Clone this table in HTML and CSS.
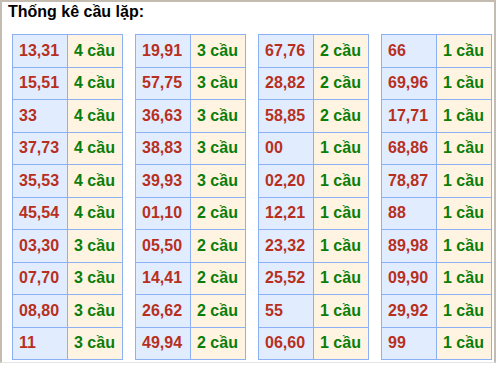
FILE: index.html
```html
<!DOCTYPE html>
<html lang="vi">
<head>
<meta charset="utf-8">
<title>Thống kê cầu lặp</title>
<link rel="stylesheet" href="styles.css">
</head>
<body>
<div class="frame">
  <h2 class="title">Thống kê cầu lặp:</h2>
  <div class="tables">
    <table class="stat">
      <tr><td class="num">13,31</td><td class="cnt">4 cầu</td></tr>
      <tr><td class="num">15,51</td><td class="cnt">4 cầu</td></tr>
      <tr><td class="num">33</td><td class="cnt">4 cầu</td></tr>
      <tr><td class="num">37,73</td><td class="cnt">4 cầu</td></tr>
      <tr><td class="num">35,53</td><td class="cnt">4 cầu</td></tr>
      <tr><td class="num">45,54</td><td class="cnt">4 cầu</td></tr>
      <tr><td class="num">03,30</td><td class="cnt">3 cầu</td></tr>
      <tr><td class="num">07,70</td><td class="cnt">3 cầu</td></tr>
      <tr><td class="num">08,80</td><td class="cnt">3 cầu</td></tr>
      <tr><td class="num">11</td><td class="cnt">3 cầu</td></tr>
    </table>
    <table class="stat">
      <tr><td class="num">19,91</td><td class="cnt">3 cầu</td></tr>
      <tr><td class="num">57,75</td><td class="cnt">3 cầu</td></tr>
      <tr><td class="num">36,63</td><td class="cnt">3 cầu</td></tr>
      <tr><td class="num">38,83</td><td class="cnt">3 cầu</td></tr>
      <tr><td class="num">39,93</td><td class="cnt">3 cầu</td></tr>
      <tr><td class="num">01,10</td><td class="cnt">2 cầu</td></tr>
      <tr><td class="num">05,50</td><td class="cnt">2 cầu</td></tr>
      <tr><td class="num">14,41</td><td class="cnt">2 cầu</td></tr>
      <tr><td class="num">26,62</td><td class="cnt">2 cầu</td></tr>
      <tr><td class="num">49,94</td><td class="cnt">2 cầu</td></tr>
    </table>
    <table class="stat">
      <tr><td class="num">67,76</td><td class="cnt">2 cầu</td></tr>
      <tr><td class="num">28,82</td><td class="cnt">2 cầu</td></tr>
      <tr><td class="num">58,85</td><td class="cnt">2 cầu</td></tr>
      <tr><td class="num">00</td><td class="cnt">1 cầu</td></tr>
      <tr><td class="num">02,20</td><td class="cnt">1 cầu</td></tr>
      <tr><td class="num">12,21</td><td class="cnt">1 cầu</td></tr>
      <tr><td class="num">23,32</td><td class="cnt">1 cầu</td></tr>
      <tr><td class="num">25,52</td><td class="cnt">1 cầu</td></tr>
      <tr><td class="num">55</td><td class="cnt">1 cầu</td></tr>
      <tr><td class="num">06,60</td><td class="cnt">1 cầu</td></tr>
    </table>
    <table class="stat">
      <tr><td class="num">66</td><td class="cnt">1 cầu</td></tr>
      <tr><td class="num">69,96</td><td class="cnt">1 cầu</td></tr>
      <tr><td class="num">17,71</td><td class="cnt">1 cầu</td></tr>
      <tr><td class="num">68,86</td><td class="cnt">1 cầu</td></tr>
      <tr><td class="num">78,87</td><td class="cnt">1 cầu</td></tr>
      <tr><td class="num">88</td><td class="cnt">1 cầu</td></tr>
      <tr><td class="num">89,98</td><td class="cnt">1 cầu</td></tr>
      <tr><td class="num">09,90</td><td class="cnt">1 cầu</td></tr>
      <tr><td class="num">29,92</td><td class="cnt">1 cầu</td></tr>
      <tr><td class="num">99</td><td class="cnt">1 cầu</td></tr>
    </table>
  </div>
</div>
</body>
</html>
```

FILE: styles.css
```css
html, body {
  margin: 0;
  padding: 0;
  background: #ffffff;
}

body {
  font-family: "Liberation Sans", Arial, sans-serif;
}

.frame {
  box-sizing: border-box;
  width: 496px;
  height: 363px;
  border: 2px solid #c4bcb0;
  border-bottom: 1px solid #e4e4e4;
  padding: 0 2px 0 10px;
  background: #ffffff;
}

.title {
  margin: 0 0 12px -4px;
  font-size: 16px;
  line-height: 20px;
  font-weight: bold;
  color: #000000;
}

.tables {
  display: flex;
  justify-content: space-between;
  align-items: flex-start;
}

.stat {
  border-collapse: collapse;
  width: 111px;
  table-layout: fixed;
}

.stat td {
  border: 1px solid #8cb0f4;
  height: 31.5px;
  padding: 0 0 0 6px;
  font-size: 16px;
  font-weight: bold;
  vertical-align: middle;
  white-space: nowrap;
  overflow: hidden;
}

.num {
  width: 48px;
  background: #e1edff;
  color: #b7301e;
}

.cnt {
  background: #fff4e2;
  color: #0a7d0a;
}
```
